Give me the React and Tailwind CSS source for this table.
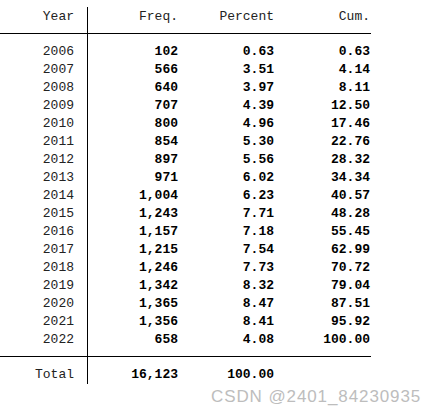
import React from 'react';

const rows = [
    ['2006', '102', '0.63', '0.63'],
    ['2007', '566', '3.51', '4.14'],
    ['2008', '640', '3.97', '8.11'],
    ['2009', '707', '4.39', '12.50'],
    ['2010', '800', '4.96', '17.46'],
    ['2011', '854', '5.30', '22.76'],
    ['2012', '897', '5.56', '28.32'],
    ['2013', '971', '6.02', '34.34'],
    ['2014', '1,004', '6.23', '40.57'],
    ['2015', '1,243', '7.71', '48.28'],
    ['2016', '1,157', '7.18', '55.45'],
    ['2017', '1,215', '7.54', '62.99'],
    ['2018', '1,246', '7.73', '70.72'],
    ['2019', '1,342', '8.32', '79.04'],
    ['2020', '1,365', '8.47', '87.51'],
    ['2021', '1,356', '8.41', '95.92'],
    ['2022', '658', '4.08', '100.00'],
];

const Row = ({ label, freq, pct, cum }) => (
    <div className="flex h-[18px] items-center leading-[18px]">
        <div className="w-[88px] shrink-0 border-r border-black pr-[13px] text-right h-full text-[#222]">{label}</div>
        <div className="w-[90px] text-right font-bold">{freq}</div>
        <div className="w-[96px] text-right font-bold">{pct}</div>
        <div className="w-[96px] text-right font-bold">{cum}</div>
    </div>
);

const App = () => {
    return (
        <div className="relative w-[438px] h-[415px] bg-white text-black overflow-hidden">
            <div className="pt-[7px] w-[371px] text-[13px] font-['Liberation_Mono','Courier_New',monospace]">
                {/* header */}
                <div className="flex h-[27px] border-b border-black text-[#222]">
                    <div className="w-[88px] shrink-0 border-r border-black pr-[13px] text-right">Year</div>
                    <div className="w-[90px] text-right">Freq.</div>
                    <div className="w-[96px] text-right">Percent</div>
                    <div className="w-[96px] text-right">Cum.</div>
                </div>

                {/* body */}
                <div className="border-b border-black">
                    <div className="w-[88px] h-[9px] border-r border-black"></div>
                    {rows.map(r => (
                        <Row key={r[0]} label={r[0]} freq={r[1]} pct={r[2]} cum={r[3]} />
                    ))}
                    <div className="w-[88px] h-[7px] border-r border-black"></div>
                </div>

                {/* total */}
                <div className="w-[88px] h-[9px] border-r border-black"></div>
                <Row label="Total" freq="16,123" pct="100.00" cum="" />
            </div>

            <div className="absolute left-[211px] top-[387px] text-[17px] leading-[20px] text-[#bdbdbd] font-['Liberation_Sans',Arial,sans-serif] tracking-[0.9px] whitespace-nowrap">
                CSDN @2401_84230935
            </div>
        </div>
    );
};

export default App;
